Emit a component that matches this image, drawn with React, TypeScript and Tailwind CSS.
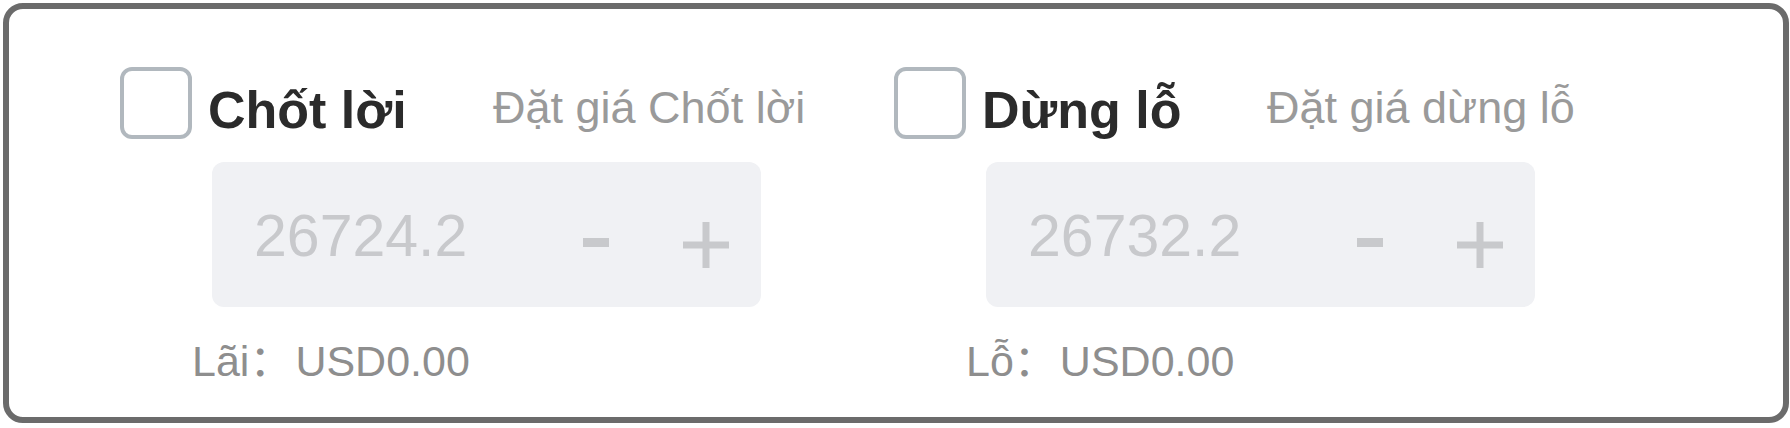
import React from "react";

function Column({ title, hint, value, sumLabel }: { title: string; hint: string; value: string; sumLabel: string }) {
  return (
    <div className="w-[774px] shrink-0 flex flex-col">
      <div className="flex items-center h-[72px]">
        <div className="w-[72px] h-[72px] shrink-0 rounded-[12px] border-[4px] border-[#b1b8be] bg-white" />
        <span className="ml-[16px] w-[285px] shrink-0 pt-[13px] text-[52px] leading-none font-bold text-[#2b2b2b] whitespace-nowrap">
          {title}
        </span>
        <span className="pt-[9px] text-[45px] leading-none text-[#9a9a9a] whitespace-nowrap">{hint}</span>
      </div>
      <div className="ml-[92px] mt-[23px] w-[549px] h-[145px] rounded-[12px] bg-[#f0f1f4] flex items-center">
        <span className="pl-[42px] pt-[4px] text-[59px] leading-none text-[#c8c9cc] w-[371px] shrink-0">{value}</span>
        <svg width="26" height="9" viewBox="0 0 26 9" className="mt-[16px] shrink-0">
          <rect x="0" y="0" width="26" height="9" fill="#c8c9cc" />
        </svg>
        <svg width="46" height="46" viewBox="0 0 46 46" className="ml-[74px] mt-[21px] shrink-0">
          <rect x="0" y="19.5" width="46" height="7" fill="#c8c9cc" />
          <rect x="19.5" y="0" width="7" height="46" fill="#c8c9cc" />
        </svg>
      </div>
      <div className="ml-[72px] mt-[29px] text-[43px] leading-none text-[#8e8e8e] whitespace-nowrap flex items-baseline">
        <span>{sumLabel}</span>
        <span className="font-['Noto_Sans_CJK_SC',sans-serif] w-[46px]">：</span>
        <span>USD0.00</span>
      </div>
    </div>
  );
}

export default function App() {
  return (
    <div className="w-[1790px] h-[428px] bg-white pl-[3px] pt-[3px] font-['Liberation_Sans',Arial,'Noto_Sans_CJK_SC',sans-serif]">
      <div className="w-[1786px] h-[420px] border-[6px] border-[#6b6b6b] rounded-[20px] bg-white pl-[111px] pt-[58px] flex">
        <Column title="Chốt lời" hint="Đặt giá Chốt lời" value="26724.2" sumLabel="Lãi" />
        <Column title="Dừng lỗ" hint="Đặt giá dừng lỗ" value="26732.2" sumLabel="Lỗ" />
      </div>
    </div>
  );
}
